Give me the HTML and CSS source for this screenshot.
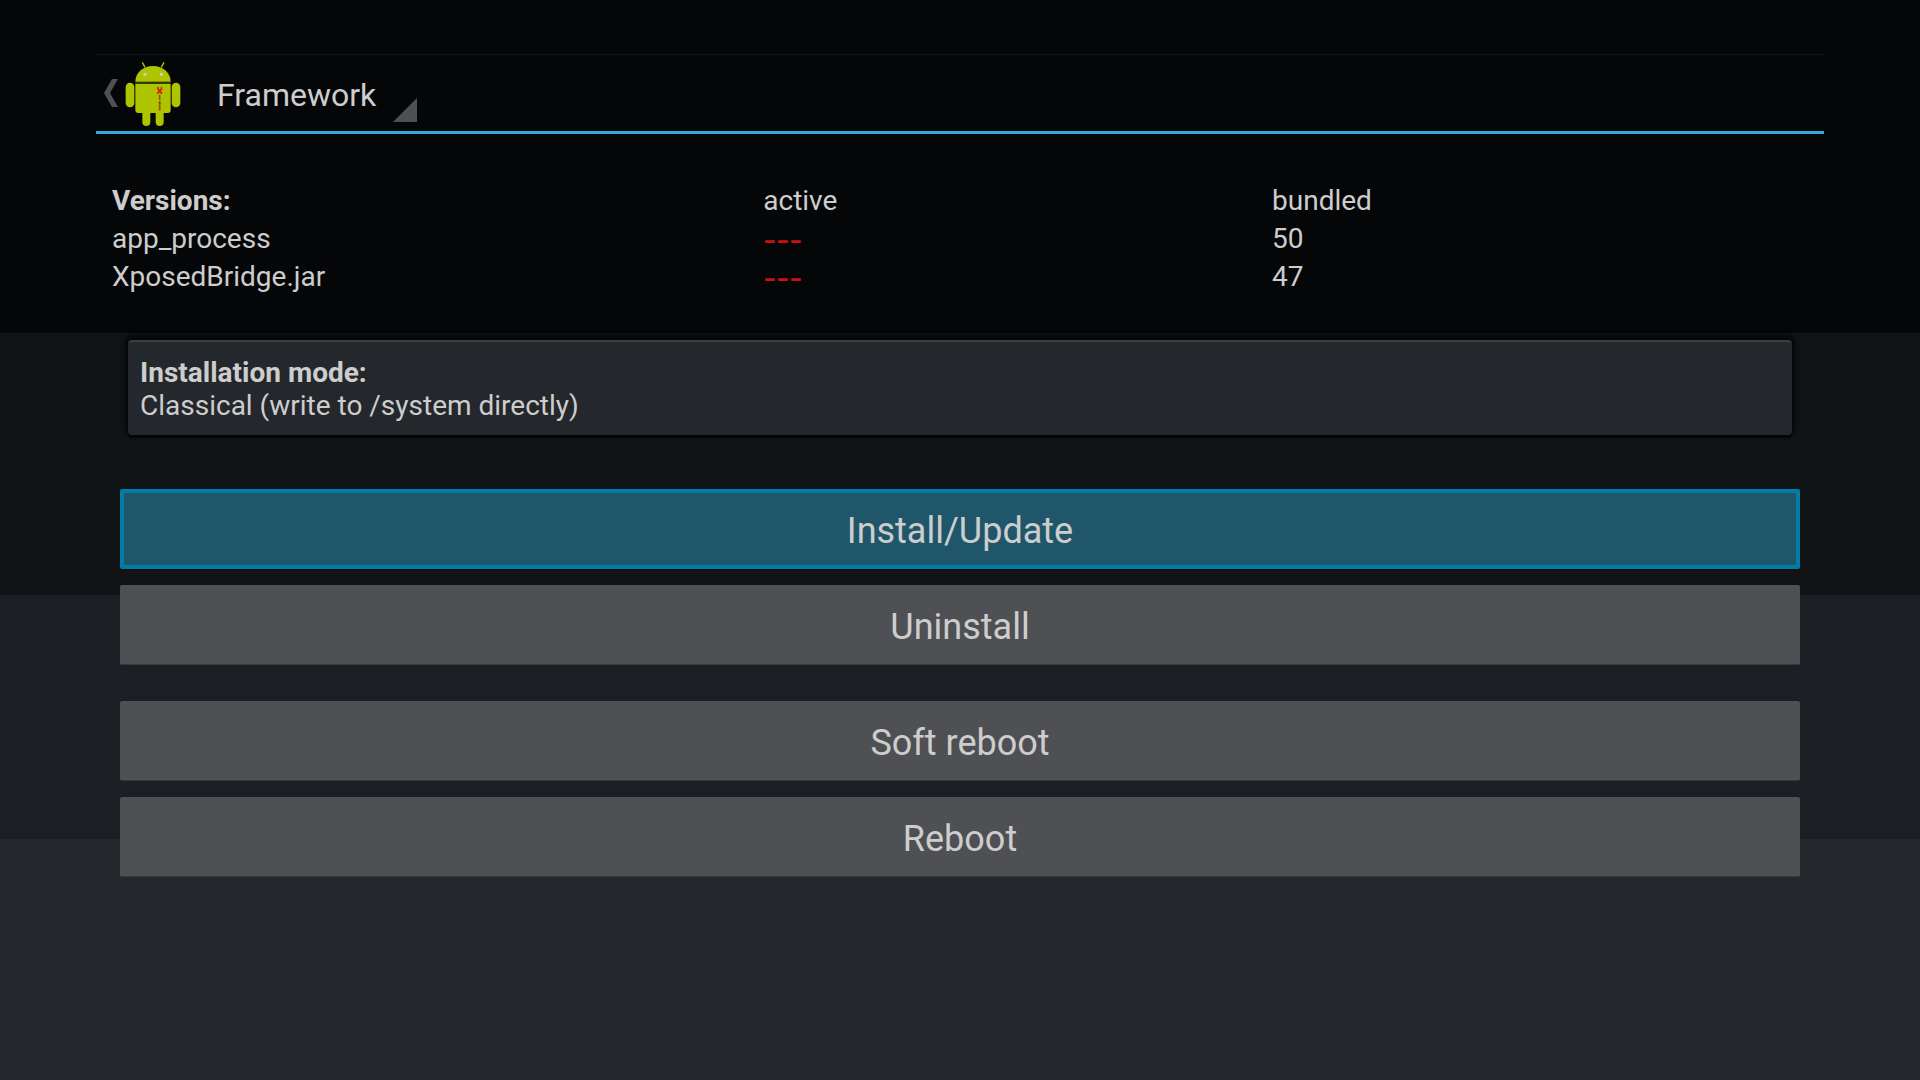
FILE: index.html
```html
<!DOCTYPE html>
<html lang="en">
<head>
<meta charset="utf-8">
<meta name="viewport" content="width=device-width, initial-scale=1">
<title>Xposed Installer - Framework</title>
<link rel="stylesheet" href="styles.css">
</head>
<body>
<div class="screen">
  <header class="action-bar">
    <a class="home" href="#" aria-label="Navigate up">
      <svg class="up" viewBox="0 0 14 28" aria-hidden="true"><path d="M8 0h6L6 14l8 14H8L0 14z"/></svg>
      <svg class="robot" viewBox="0 0 168 195" aria-hidden="true">
        <g class="robot-line"><path d="M52 4l8 15M117 4l-8 15"/></g>
        <g class="robot-skin">
          <path d="M31 62C31 36 53 15 84 15s53 21 53 47z"/>
          <path d="M31 68h106v79q0 9-9 9H40q-9 0-9-9z"/>
          <rect x="2" y="65" width="26" height="74" rx="13"/>
          <rect x="140" y="65" width="26" height="74" rx="13"/>
          <path d="M52 150h24v33q0 12-12 12t-12-12zM92 150h24v33q0 12-12 12t-12-12z"/>
        </g>
        <path class="robot-neck" d="M31 66h106"/>
        <circle class="robot-eye" cx="60" cy="40" r="5"/><circle class="robot-eye" cx="109" cy="40" r="5"/>
        <path class="robot-thread" d="M97 80h5M107 80h5M104 101v45"/>
        <path class="robot-cross" d="M97 82l14 16M111 82L97 98"/>
        <path class="robot-stitch" d="M104 124v24"/>
      </svg>
    </a>
    <label class="spinner">
      <select class="section" aria-label="Section"><option>Framework</option></select>
      <svg class="corner" viewBox="0 0 24 24" aria-hidden="true"><path d="M24 0v24H0z"/></svg>
    </label>
  </header>
  <main class="content">
    <table class="versions">
      <thead><tr><th class="col-name" scope="col">Versions:</th><th class="col-active" scope="col">active</th><th scope="col">bundled</th></tr></thead>
      <tbody>
        <tr><td>app_process</td><td class="missing">---</td><td>50</td></tr>
        <tr><td>XposedBridge.jar</td><td class="missing">---</td><td>47</td></tr>
      </tbody>
    </table>
    <button class="mode" type="button"><strong>Installation mode:</strong><span>Classical (write to /system directly)</span></button>
    <div class="actions">
      <button class="action focused" type="button">Install/Update</button>
      <button class="action" type="button">Uninstall</button>
    </div>
    <div class="actions">
      <button class="action" type="button">Soft reboot</button>
      <button class="action" type="button">Reboot</button>
    </div>
  </main>
</div>
</body>
</html>
```
FILE: styles.css
```css
* { box-sizing: border-box; }

html { min-height: 100%; display: flex; flex-direction: column; background: #24272b; }

body {
  flex: 1;
  margin: 0;
  color: #cdcdcd;
  font-family: Roboto, "Liberation Sans", sans-serif;
  font-size: 28px;
  line-height: 33px;
  background: linear-gradient(#050608 333px, #111416 333px 595px, #1b1e22 595px 839px, #24272b 839px);
}

button, select { font: inherit; color: inherit; border: 0; cursor: pointer; }

.screen { padding: 54px 5%; }

.action-bar {
  display: flex;
  align-items: stretch;
  height: 80px;
  border-top: 1px solid #111416;
  border-bottom: 3px solid #33a9d9;
}

.home { display: flex; align-items: center; gap: 7px; padding-left: 8px; }
.up { width: 14px; height: 28px; fill: #4f5053; }
.robot { width: 56px; height: 65px; }
.robot-skin { fill: #afc400; }
.robot-line { fill: none; stroke: #afc400; stroke-width: 4; }
.robot-neck { stroke: #3d4400; stroke-width: 4; }
.robot-eye { fill: #cdcdcd; }
.robot-thread { fill: none; stroke: #786500; stroke-width: 5; stroke-dasharray: 16 3; }
.robot-cross { fill: none; stroke: #ee1010; stroke-width: 5; }
.robot-stitch { stroke: #cc2500; stroke-width: 5; stroke-dasharray: 5 5; }

.spinner { display: flex; align-items: center; gap: 16px; margin-left: 36px; }
.section { appearance: none; padding: 4px 0 0; background: transparent; font-size: 32px; line-height: 40px; }
.section option { color: #cdcdcd; background: #24272b; }
.corner { align-self: flex-end; width: 24px; height: 24px; margin-bottom: 9px; fill: #4f5053; }

.content { padding: 48px 24px 0; }

.versions {
  width: calc(100% + 16px);
  margin: 0 -8px;
  table-layout: fixed;
  border-collapse: collapse;
  line-height: 38px;
}
.versions th, .versions td { padding: 0; text-align: left; font-weight: 400; }
.versions .col-name { width: 38.4%; font-weight: 700; }
.versions .col-active { width: 30%; }
.versions .missing { color: #cc1010; font-family: "DejaVu Sans", sans-serif; font-size: 36px; }

.mode {
  display: flex;
  flex-direction: column;
  align-items: flex-start;
  width: calc(100% - 16px);
  margin: 44px 8px 54px;
  padding: 14px 12px 13px;
  border-top: 2px solid #3b3c3e;
  border-radius: 4px;
  background: #24272b;
  box-shadow: 0 -2px 4px 3px #050608, 0 3px 1px #050608;
}

.actions { display: flex; flex-direction: column; gap: 16px; margin-bottom: 36px; }
.action {
  height: 80px;
  padding: 5px 0 0;
  border-bottom: 1px solid #37383b;
  border-radius: 2px;
  background: #4f5053;
  font-size: 36px;
}
.action.focused { border: 4px solid #047ca8; background: #1f566a; box-shadow: 0 1px #050608; outline: 0; }
```
